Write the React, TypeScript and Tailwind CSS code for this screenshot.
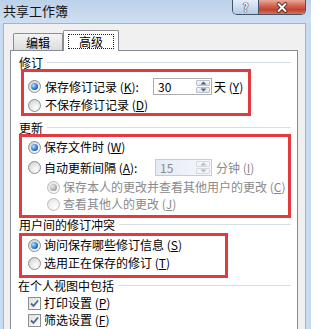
import React from "react";

function Radio({ checked = false, disabled = false }: { checked?: boolean; disabled?: boolean }) {
  return (
    <span
      className={
        "w-[13px] h-[13px] shrink-0 rounded-full border flex items-center justify-center " +
        (disabled
          ? "border-[#bcbcbc] bg-[radial-gradient(circle_at_65%_70%,#ffffff,#ececec_60%,#dcdcdc)]"
          : "border-[#8c8e90] bg-[radial-gradient(circle_at_65%_70%,#ffffff,#e0e0e0_60%,#c4c4c4)]")
      }
    >
      {checked && (
        <span
          className={
            "w-[7px] h-[7px] rounded-full " +
            (disabled
              ? "bg-[radial-gradient(circle_at_35%_35%,#eeeeee,#a9a9a9_60%,#8a8a8a)]"
              : "bg-[radial-gradient(circle_at_35%_35%,#b8e0ff,#2b7bd2_55%,#0d3b7a)]")
          }
        />
      )}
    </span>
  );
}

function Check() {
  return (
    <span className="w-[13px] h-[13px] shrink-0 border border-[#8c8e90] bg-[linear-gradient(135deg,#dedede,#ffffff)] flex items-center justify-center">
      <svg width="11" height="11" viewBox="0 0 11 11">
        <path d="M2 5.5 L4.5 8 L9 2.5" fill="none" stroke="#4a6690" strokeWidth="1.8" />
      </svg>
    </span>
  );
}

function Spin({ value, disabled = false }: { value: string; disabled?: boolean }) {
  return (
    <div
      className={
        "h-[17px] flex border " +
        (disabled
          ? "w-[57px] border-[#c5ccd6] bg-gradient-to-r from-[#e4ebf5] to-[#f6f8fb]"
          : "w-[59px] border-[#abadb3] bg-white")
      }
    >
      <span
        className={
          "flex-1 pl-[4px] text-[12px] leading-[15px] " + (disabled ? "text-[#8a8a8a]" : "text-black")
        }
      >
        {value}
      </span>
      <div className="w-[16px] flex flex-col p-px gap-px">
        <div
          className={
            "h-[6px] flex-1 border rounded-[1px] flex items-center justify-center " +
            (disabled
              ? "border-[#d6dbe2] bg-[#f2f4f7]"
              : "border-[#b8c2cf] bg-gradient-to-b from-[#f6f6f6] to-[#e0e3e8]")
          }
        >
          <svg width="7" height="4" viewBox="0 0 7 4">
            <path d="M0.5 3.5 L3.5 0.5 L6.5 3.5 Z" fill={disabled ? "#b4bac4" : "#4d6185"} />
          </svg>
        </div>
        <div
          className={
            "h-[6px] flex-1 border rounded-[1px] flex items-center justify-center " +
            (disabled
              ? "border-[#d6dbe2] bg-[#f2f4f7]"
              : "border-[#b8c2cf] bg-gradient-to-b from-[#f6f6f6] to-[#e0e3e8]")
          }
        >
          <svg width="7" height="4" viewBox="0 0 7 4">
            <path d="M0.5 0.5 L3.5 3.5 L6.5 0.5 Z" fill={disabled ? "#b4bac4" : "#4d6185"} />
          </svg>
        </div>
      </div>
    </div>
  );
}

export default function App() {
  return (
    <div className="w-[311px] h-[329px] overflow-hidden bg-[#c9dbf0] font-['Noto_Sans_CJK_SC',sans-serif] text-black text-[12px] leading-[14px]">
      {/* title bar */}
      <div className="h-[23px] flex items-start bg-gradient-to-b from-[#bcd1ea] to-[#cfdff2]">
        <div className="pl-[3px] pt-[2px] text-[13px] leading-[17px] text-[#141414]">共享工作簿</div>
        <div className="ml-auto mr-[5px] flex h-[15px] border border-t-0 border-[#44546b] rounded-b-[5px] overflow-hidden">
          <div className="w-[26px] h-full bg-gradient-to-b from-[#e6eef8] to-[#b6cae3] flex items-center justify-center border-r border-[#44546b]">
            <span className="text-[11px] leading-[13px] font-bold text-white [text-shadow:0_0_1px_#1d2c44,0_0_1px_#1d2c44,0_0_1px_#1d2c44]">
              ?
            </span>
          </div>
          <div className="w-[46px] h-full bg-[linear-gradient(#eaa99a,#d0604e_45%,#c2412f_70%,#d8735e)] flex items-center justify-center">
            <svg width="14" height="11" viewBox="0 0 14 11">
              <path d="M3.5 2 L10.5 9 M10.5 2 L3.5 9" stroke="#4a1c14" strokeWidth="3.6" strokeLinecap="round" />
              <path d="M3.5 2 L10.5 9 M10.5 2 L3.5 9" stroke="#ffffff" strokeWidth="2" strokeLinecap="round" />
            </svg>
          </div>
        </div>
      </div>

      {/* client area */}
      <div className="ml-[3px] mr-[5px] h-[306px] border border-b-0 border-[#a3b4c9] bg-[#f0f0f0]">
        {/* tabs */}
        <div className="h-[26px] flex items-end pl-[9px]">
          <div className="w-[50px] h-[17px] border border-b-0 border-[#898c95] rounded-t-[2px] bg-gradient-to-b from-[#f4f4f4] to-[#dcdcdc] flex items-center justify-center pt-px">
            编辑
          </div>
          <div className="relative top-[1px] z-10 w-[56px] h-[21px] border border-b-0 border-[#898c95] rounded-t-[2px] bg-white flex items-start justify-center pt-[3px]">
            <span className="w-[46px] h-[15px] border border-dotted border-[#222] flex items-center justify-center leading-[13px]">
              高级
            </span>
          </div>
        </div>

        {/* panel */}
        <div className="ml-[6px] w-[288px] h-[280px] border border-[#898c95] bg-white">
          {/* 修订 */}
          <div className="mt-[5px] ml-[8px] mr-[6px] h-[13px] flex items-center leading-[13px]">
            <span>修订</span>
            <div className="ml-[4px] flex-1 h-px bg-[#d5dfe5]" />
          </div>
          <div className="ml-[10px] w-[230px] h-[47px] border-[3px] border-[#e4393e] pt-[6px] pl-[4px] flex flex-col gap-[2px]">
            <div className="h-[17px] flex items-center">
              <Radio checked />
              <span className="ml-[4px] w-[108px]">
                保存修订记录 (<u>K</u>):
              </span>
              <Spin value="30" />
              <span className="ml-[2px]">
                天 (<u>Y</u>)
              </span>
            </div>
            <div className="h-[16px] flex items-center">
              <Radio />
              <span className="ml-[4px]">
                不保存修订记录 (<u>D</u>)
              </span>
            </div>
          </div>

          {/* 更新 */}
          <div className="mt-[5px] ml-[8px] mr-[6px] h-[13px] flex items-center leading-[13px]">
            <span>更新</span>
            <div className="ml-[4px] flex-1 h-px bg-[#d5dfe5]" />
          </div>
          <div className="ml-[8px] w-[272px] h-[84px] border-[3px] border-[#e4393e] pt-[2px] pl-[6px] flex flex-col">
            <div className="h-[16px] flex items-center">
              <Radio checked />
              <span className="ml-[3px]">
                保存文件时 (<u>W</u>)
              </span>
            </div>
            <div className="mt-[4px] h-[17px] flex items-center">
              <Radio />
              <span className="ml-[3px] w-[111px]">
                自动更新间隔 (<u>A</u>):
              </span>
              <Spin value="15" disabled />
              <span className="ml-[4px] text-[#8a8a8a]">
                分钟 (<u>I</u>)
              </span>
            </div>
            <div className="mt-[3px] h-[16px] flex items-center pl-[19px] text-[#8a8a8a]">
              <Radio checked disabled />
              <span className="ml-[3px]">
                保存本人的更改并查看其他用户的更改 (<u>C</u>)
              </span>
            </div>
            <div className="mt-[1px] h-[16px] flex items-center pl-[19px] text-[#8a8a8a]">
              <Radio disabled />
              <span className="ml-[3px]">
                查看其他人的更改 (<u>J</u>)
              </span>
            </div>
          </div>

          {/* 用户间的修订冲突 */}
          <div className="ml-[8px] mr-[6px] h-[13px] flex items-center leading-[13px]">
            <span>用户间的修订冲突</span>
            <div className="ml-[4px] flex-1 h-px bg-[#d5dfe5]" />
          </div>
          <div className="mt-[2px] ml-[8px] w-[209px] h-[45px] border-[3px] border-[#e4393e] pt-[1px] pl-[6px] flex flex-col gap-[2px]">
            <div className="h-[16px] flex items-center">
              <Radio checked />
              <span className="ml-[3px]">
                询问保存哪些修订信息 (<u>S</u>)
              </span>
            </div>
            <div className="h-[16px] flex items-center">
              <Radio />
              <span className="ml-[3px]">
                选用正在保存的修订 (<u>T</u>)
              </span>
            </div>
          </div>

          {/* 在个人视图中包括 */}
          <div className="mt-[1px] ml-[7px] mr-[6px] h-[13px] flex items-center leading-[13px]">
            <span>在个人视图中包括</span>
            <div className="ml-[4px] flex-1 h-px bg-[#d5dfe5]" />
          </div>
          <div className="mt-[3px] pl-[17px] h-[16px] flex items-center">
            <Check />
            <span className="ml-[3px]">
              打印设置 (<u>P</u>)
            </span>
          </div>
          <div className="mt-[1px] pl-[17px] h-[16px] flex items-center">
            <Check />
            <span className="ml-[3px]">
              筛选设置 (<u>F</u>)
            </span>
          </div>
        </div>
      </div>
    </div>
  );
}
